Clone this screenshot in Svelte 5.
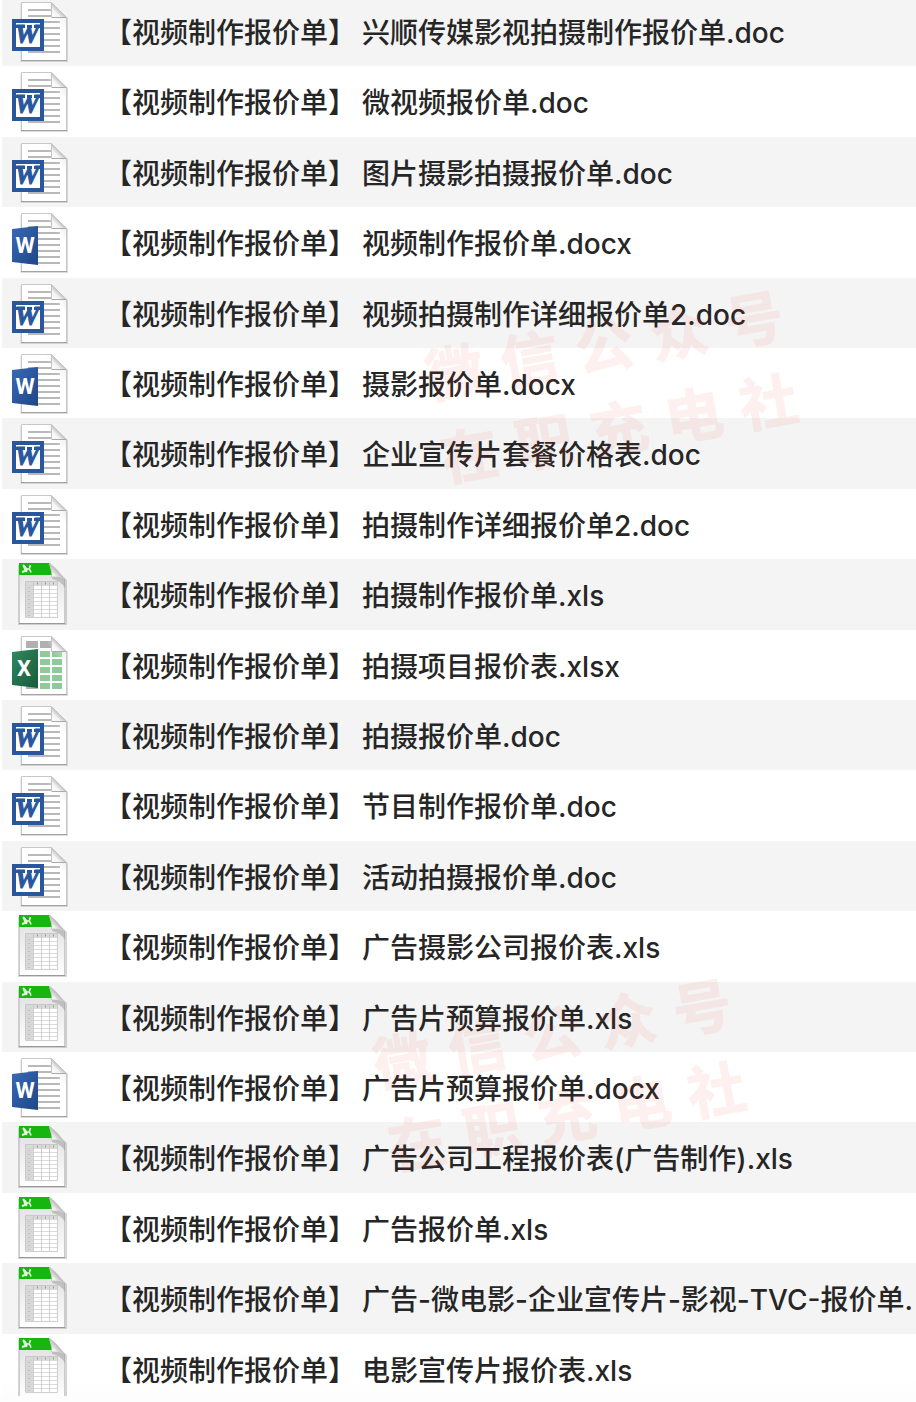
<script>
    const prefix = '【视频制作报价单】';

    let files = $state([
        {name: '兴顺传媒影视拍摄制作报价单', ext: 'doc'},
        {name: '微视频报价单', ext: 'doc'},
        {name: '图片摄影拍摄报价单', ext: 'doc'},
        {name: '视频制作报价单', ext: 'docx'},
        {name: '视频拍摄制作详细报价单2', ext: 'doc'},
        {name: '摄影报价单', ext: 'docx'},
        {name: '企业宣传片套餐价格表', ext: 'doc'},
        {name: '拍摄制作详细报价单2', ext: 'doc'},
        {name: '拍摄制作报价单', ext: 'xls'},
        {name: '拍摄项目报价表', ext: 'xlsx'},
        {name: '拍摄报价单', ext: 'doc'},
        {name: '节目制作报价单', ext: 'doc'},
        {name: '活动拍摄报价单', ext: 'doc'},
        {name: '广告摄影公司报价表', ext: 'xls'},
        {name: '广告片预算报价单', ext: 'xls'},
        {name: '广告片预算报价单', ext: 'docx'},
        {name: '广告公司工程报价表(广告制作)', ext: 'xls'},
        {name: '广告报价单', ext: 'xls'},
        {name: '广告-微电影-企业宣传片-影视-TVC-报价单', ext: ''},
        {name: '电影宣传片报价表', ext: 'xls'}
    ]);

    const watermark = ['微信公众号', '在职充电社'];
    const lines = [16, 22, 28, 34, 40, 46, 52];
    const cells = [17, 25, 33, 41, 49];
    const sheetRows = [22, 26, 30, 34, 38, 42, 46, 50];
</script>

<svelte:head>
    <title>视频制作报价单</title>
</svelte:head>

<!-- shared gradients for the icons -->
<svg class="defs" width="0" height="0" aria-hidden="true">
    <defs>
        <linearGradient id="fold" x1="0" y1="1" x2="1" y2="0">
            <stop offset="0" stop-color="#fff"/>
            <stop offset="0.3" stop-color="#f4f4f4"/>
            <stop offset="0.5" stop-color="#c4c4c4"/>
        </linearGradient>
        <linearGradient id="shade" x1="0" y1="1" x2="1" y2="0">
            <stop offset="0.35" stop-color="#fff" stop-opacity="0"/>
            <stop offset="1" stop-color="#bbb"/>
        </linearGradient>
        <linearGradient id="word" x1="0" y1="0" x2="1" y2="1">
            <stop offset="0" stop-color="#3a69b5"/>
            <stop offset="1" stop-color="#1e4688"/>
        </linearGradient>
        <linearGradient id="excel" x1="0" y1="0" x2="1" y2="1">
            <stop offset="0" stop-color="#2f8a60"/>
            <stop offset="1" stop-color="#175a3a"/>
        </linearGradient>
        <linearGradient id="paper" x1="0" y1="0" x2="0" y2="1">
            <stop offset="0" stop-color="#dedede"/>
            <stop offset="1" stop-color="#fff"/>
        </linearGradient>
    </defs>
</svg>

{#snippet page()}
    <path d="M10.5 3.5H42L58 18V62H10.5Z" fill="#999" opacity="0.35"/>
    <path d="M11.5 2.5H41.5L56.5 17.5V60.5H11.5Z" fill="#fff" stroke="#c8c8c8"/>
    <path d="M11 60.5H57" stroke="#a3a3a3"/>
{/snippet}

{#snippet corner()}
    <path d="M36 3H42L56 17V30L41.5 17Z" fill="url(#shade)" opacity="0.8"/>
    <path d="M41.5 2.5V17.5H56.5Z" fill="url(#fold)" stroke="#c4c4c4"/>
    <path d="M42 17.5H56" stroke="#aaa"/>
{/snippet}

{#snippet icon(ext)}
    <svg class="icon" viewBox="0 0 60 64" aria-hidden="true">
        {#if ext == 'doc' || ext == 'docx'}
            {@render page()}
            <path d="M18 10H41" stroke="#b0b0b0" stroke-width="1.8"/>
            {#each lines as y}
                <path d="M18 {y}H50" stroke="#b0b0b0" stroke-width="1.8"/>
            {/each}
            {@render corner()}
            {#if ext == 'doc'}
                <rect x="2" y="19" width="32" height="32" fill="#29579c"/>
                <rect x="6" y="23" width="24" height="24" fill="#fff"/>
                <text class="serif" x="17" y="43" text-anchor="middle">W</text>
                <path d="M6 25H15V28H6ZM17 25H22V28H17ZM24 25H30V28H24Z" fill="#29579c"/>
            {:else}
                <path d="M2 18L28 15V54L2 51Z" fill="url(#word)"/>
                <text class="letter" x="15" y="42" text-anchor="middle">W</text>
            {/if}
        {:else if ext == 'xlsx'}
            {@render page()}
            <path d="M16 7H28V14H16ZM30 7H41V14H30ZM16 17H28V55H16Z" fill="#b0b0b0"/>
            {#each cells as y}
                <path d="M30 {y}H40V{y + 6}H30ZM42 {y}H52V{y + 6}H42Z" fill="#91c99b"/>
            {/each}
            {@render corner()}
            <path d="M2 18L28 15V54L2 51Z" fill="url(#excel)"/>
            <text class="letter" x="14" y="42" text-anchor="middle">X</text>
        {:else}
            <path d="M8 2H41L57 17V62H8Z" fill="#777" opacity="0.3"/>
            <path d="M9.5 0.5H40L54.5 16V60.5H9.5Z" fill="url(#paper)" stroke="#ccc"/>
            <path d="M9 60.5H55" stroke="#999"/>
            <path d="M9 0H39L42 12H9Z" fill="#16b60e"/>
            <path d="M13 2L15.500 5M12 9L15 8" fill="none" stroke="#eaffe8" stroke-width="2"/>
            <ellipse cx="15.5" cy="6" rx="1.6" ry="3.4" fill="#eaffe8" transform="rotate(-20 15.5 6)"/>
            <path d="M16 6H20M20.500 2L19.500 5M19.500 6L21 9.500" fill="none" stroke="#eaffe8" stroke-width="1.6"/>
            <path d="M42 12L55 16V25Q51 18 42 16Z" fill="#777" opacity="0.35"/>
            <path d="M39.500 0.5Q48 6 54.5 17Q49 13 41.5 14Q43 8 39.500 0.5Z" fill="url(#fold)" stroke="#bbb" stroke-width="0.6"/>
            <path d="M15 18H48V54H15Z" fill="#fff"/>
            <path d="M15 18H48V22H23V54H15Z" fill="#d9d9d9"/>
            {#each sheetRows as y}
                <path d="M15 {y}.5H48" stroke="#d2d2d2" stroke-width="0.8"/>
                <path d="M18 {y + 2}.5H20" stroke="#c0c0c0"/>
            {/each}
            <path d="M15.5 18.5H47.5V54.5H15.5ZM23.5 18V54M31.5 18V54M39.5 18V54" fill="none" stroke="#c4c4c4" stroke-width="0.8"/>
            <path d="M27 20.5H28M35 20.5H36M43 20.5H44" stroke="#999" stroke-width="2"/>
        {/if}
    </svg>
{/snippet}

<main lang="zh-CN">
    <ul>
        {#each files as file}
        <li>
            {@render icon(file.ext || 'xls')}
            <p class="name"><span>{prefix}</span><span>{file.name}.{file.ext}</span></p>
        </li>
        {/each}
    </ul>

    {#each ['upper', 'lower'] as place}
    <div class="watermark {place}">
        {#each watermark as line}
        <p>
            {#each line as char}<span>{char}</span>{/each}
        </p>
        {/each}
    </div>
    {/each}
</main>

<style>
:global(body) {
    margin: 0;
    background: #fdfdfd;
}

.defs {
    position: absolute;
}

main {
    position: relative;
    overflow: hidden;
    padding-left: 2px;
    background: #fff;
    font-family: Inter, "Noto Sans CJK SC", sans-serif;
}

ul {
    list-style: none;
    margin: -4px 0 0;
    padding: 0;
}

li {
    display: flex;
    align-items: flex-start;
    gap: 34px;
    height: 70px;
    padding-left: 8px;
    box-sizing: border-box;
    overflow: hidden;
    background: #fff;

    &:nth-child(odd) {
        background: #f4f4f4;
    }

    &:nth-child(5n + 2), &:nth-child(5n + 4) {
        height: 71px;
    }

    &:last-child {
        height: 62px;
        background: linear-gradient(#fff 40px, #fdfdfd);
    }
}

.icon {
    flex: none;
    width: 60px;
    height: 64px;
    margin-top: 4px;
}

.letter {
    font: bold 22px Roboto, sans-serif;
    fill: #fff;
}

.serif {
    font: italic bold 28px "Liberation Serif", serif;
    fill: #29579c;
    stroke: #29579c;
}

.name {
    display: flex;
    gap: 6px;
    margin: 0;
    color: #262626;
    font-size: 28px;
    font-weight: 500;
    line-height: 74px;
    white-space: nowrap;
}

.watermark {
    position: absolute;
    display: flex;
    flex-direction: column;
    gap: 20px;
    color: #f03c28;
    font-family: "Noto Sans CJK SC", sans-serif;
    font-size: 58px;
    font-weight: bold;
    line-height: 64px;
    opacity: 0.07;
    -webkit-text-stroke: 1px #f03c28;
    stroke-linejoin: round;
    transform: rotate(-10deg);
    pointer-events: none;

    p {
        display: flex;
        gap: 18px;
        margin: 0;
    }
}

.upper {
    left: 430px;
    top: 310px;
}

.lower {
    left: 378px;
    top: 998px;
}
</style>
